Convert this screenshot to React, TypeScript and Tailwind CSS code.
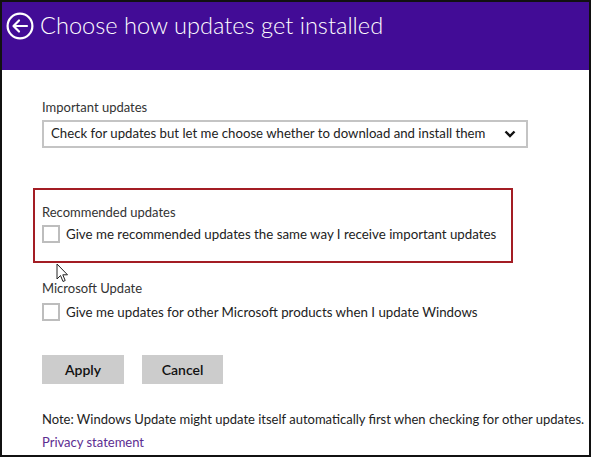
import React from 'react';

// Windows 8 "Choose how updates get installed" settings page

function Checkbox() {
  return <span className="block w-[18px] h-[18px] border-2 border-[#bdbdbd] bg-white shrink-0" />;
}

function Cursor() {
  return (
    <svg className="absolute left-[54px] top-[261px]" width="13" height="20" viewBox="0 0 13 20">
      <path d="M1 1 L1 16 L4.5 12.5 L7 18.5 L9.2 17.5 L6.8 11.8 L11.5 11.8 Z" fill="#fff" stroke="#222" strokeWidth="1" strokeLinejoin="round" />
    </svg>
  );
}

export default function App() {
  return (
    <div
      className="relative w-[591px] h-[457px] bg-white border-2 border-[#111] overflow-hidden text-[#333] whitespace-nowrap"
      style={{ fontFamily: '"Segoe UI", Lato, "Noto Sans", sans-serif' }}
    >
      <header className="h-[68px] bg-[#420c96] flex items-start pt-[9px] pl-[4px] gap-[6px]">
        <svg className="mt-[1px]" width="28" height="28" viewBox="0 0 28 28" fill="none" stroke="#fff" strokeWidth="2.2">
          <circle cx="14" cy="14" r="12.4" />
          <path d="M21 14 H8 M13 8.5 L7.5 14 L13 19.5" strokeLinecap="round" strokeLinejoin="round" />
        </svg>
        <h1 className="text-white text-[23.6px] font-light leading-[28px]">Choose how updates get installed</h1>
      </header>

      <div className="pl-[40px] pt-[28px]">
        <div className="text-[13px] leading-[18px]">Important updates</div>
        <div className="mt-[4px] w-[486px] h-[28px] border-2 border-[#c4c4c4] flex items-center justify-between pl-[7px] pr-[10px]">
          <span className="text-[13.2px] text-[#222]">Check for updates but let me choose whether to download and install them</span>
          <svg width="12" height="8" viewBox="0 0 12 8" fill="none" stroke="#111" strokeWidth="2.4">
            <path d="M1.5 1.5 L6 6 L10.5 1.5" />
          </svg>
        </div>

        <div className="mt-[40px] -ml-[9px] w-[480px] h-[75px] border-2 border-[#a31d24] pl-[7px] pt-[13px]">
          <div className="text-[13px] leading-[18px]">Recommended updates</div>
          <div className="mt-[2px] flex items-center gap-[6px]">
            <Checkbox />
            <span className="text-[13.3px] text-[#222] pt-[2px]">Give me recommended updates the same way I receive important updates</span>
          </div>
        </div>

        <div className="mt-[16px] text-[13px] leading-[18px]">Microsoft Update</div>
        <div className="mt-[4px] flex items-center gap-[6px]">
          <Checkbox />
          <span className="text-[13.3px] text-[#222] pt-[2px]">Give me updates for other Microsoft products when I update Windows</span>
        </div>

        <div className="mt-[32px] flex gap-[18px]">
          <button className="w-[82px] h-[29px] bg-[#cccccc] text-[14px] font-semibold text-[#111]">Apply</button>
          <button className="w-[81px] h-[29px] bg-[#cccccc] text-[14px] font-semibold text-[#111]">Cancel</button>
        </div>

        <div className="mt-[26px] text-[13px] leading-[18px] text-[#222]">Note: Windows Update might update itself automatically first when checking for other updates.</div>
        <div className="mt-[5px] text-[13px] leading-[18px] text-[#5c2d91]">Privacy statement</div>
      </div>

      <Cursor />
    </div>
  );
}
